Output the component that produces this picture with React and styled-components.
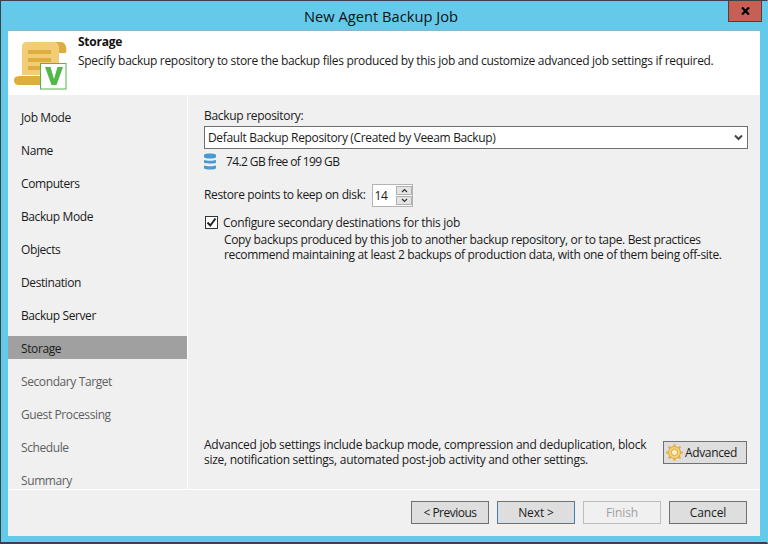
import React from "react";
import styled, { createGlobalStyle } from "styled-components";

const Global = createGlobalStyle`
  html, body { margin: 0; padding: 0; background: #65caea; }
  body { font-family: "Open Sans", "Noto Sans", "Liberation Sans", sans-serif; font-size: 12px; color: #1a1a1a; }
`;

const Win = styled.div`
  width: 768px; height: 544px; box-sizing: border-box;
  background: #65caea; border: 1px solid #3b4148; border-bottom-width: 2px; border-right-color: #65caea;
  display: flex; flex-direction: column; position: relative; overflow: hidden;
`;
const TitleBar = styled.div`
  height: 29px; flex: none; display: flex; align-items: center; justify-content: center;
  font-size: 14.7px; color: #111; box-sizing: border-box; padding: 1px 6px 0 0;
`;
const CloseBtn = styled.div`
  position: absolute; top: 0; right: 5px; width: 34px; height: 21px; box-sizing: border-box;
  background: #c75f54; border: 1px solid #5c3a38; border-top: none;
  display: flex; align-items: center; justify-content: center;
`;
const Body = styled.div`
  flex: 1; margin: 0 7px 6px 7px; display: flex; flex-direction: column;
  background: #f0f0f0; border-top: 1px solid #8fb5c4; min-height: 0;
`;
const Header = styled.div`
  height: 64px; flex: none; background: #fff; display: flex; box-sizing: border-box;
  padding: 3px 0 0 6px;
`;
const HeaderIcon = styled.div`
  width: 64px; flex: none; padding-top: 8px; box-sizing: border-box;
`;
const HeaderText = styled.div`
  line-height: 16px;
`;
const HeaderTitle = styled.div`
  font-weight: 700; color: #111; margin-bottom: 3px; letter-spacing: -0.25px;
`;
const HeaderDesc = styled.div`
  color: #1a1a1a; letter-spacing: -0.31px; white-space: nowrap;
`;
const Middle = styled.div`
  flex: 1; display: flex; min-height: 0;
`;
const Sidebar = styled.nav`
  width: 179px; flex: none; padding-top: 10px; box-sizing: border-box; overflow: hidden;
  display: flex; flex-direction: column; gap: 10px;
`;
const Step = styled.div`
  height: 23px; flex: none; box-sizing: border-box; display: flex; align-items: center; padding: 1px 0 0 13px;
  background: ${p => (p.$active ? "#a0a0a0" : "transparent")};
  color: ${p => (p.$disabled ? "#5f5f5f" : "#1a1a1a")};
  letter-spacing: -0.4px;
`;
const Divider = styled.div`
  width: 1px; flex: none; background: #fff;
`;
const Content = styled.main`
  flex: 1; min-width: 0; padding: 12px 12px 0 16px; display: flex; flex-direction: column;
`;
const FieldLabel = styled.div`
  line-height: 18px; letter-spacing: -0.3px; margin-bottom: 1px;
`;
const Select = styled.div`
  height: 23px; flex: none; box-sizing: border-box; background: #fff; border: 1px solid #6e6e6e;
  display: flex; align-items: center; justify-content: space-between; padding: 0 4px 0 3px;
  letter-spacing: -0.34px;
`;
const FreeRow = styled.div`
  display: flex; align-items: center; gap: 10px; height: 20px; margin-top: 2px; letter-spacing: -0.6px;
`;
const RestoreRow = styled.div`
  display: flex; align-items: center; gap: 7px; margin-top: 13px; height: 23px; letter-spacing: -0.35px;
`;
const RestoreLabel = styled.span`
  padding-bottom: 2px;
`;
const Spin = styled.div`
  width: 41px; height: 23px; box-sizing: border-box; border: 1px solid #b4b4b4; background: #fff;
  display: flex; justify-content: space-between; align-items: center; padding: 0 0 0 1px;
`;
const SpinBtns = styled.div`
  width: 16px; height: 19px; display: flex; flex-direction: column; gap: 1px;
`;
const SpinBtn = styled.div`
  flex: 1; background: #e4e4e4; border: 1px solid #b0b0b0; box-sizing: border-box;
  display: flex; align-items: center; justify-content: center;
`;
const CheckRow = styled.div`
  display: flex; align-items: center; gap: 5px; margin: 6px 0 0 1px; height: 18px; letter-spacing: -0.31px;
`;
const Box = styled.div`
  width: 13px; height: 13px; box-sizing: border-box; border: 1px solid #333; background: #fff;
  display: flex; align-items: center; justify-content: center;
`;
const Help = styled.div`
  margin: 1px 0 0 20px; line-height: 15px; letter-spacing: -0.34px; white-space: nowrap;
`;
const Spacer = styled.div`flex: 1;`;
const AdvRow = styled.div`
  display: flex; justify-content: space-between; align-items: flex-start; padding: 0 1px 22px 0;
`;
const AdvText = styled.div`
  line-height: 15px; letter-spacing: -0.27px; white-space: nowrap;
`;
const Btn = styled.button`
  width: ${p => p.$w || 78}px; height: 23px; flex: none; box-sizing: border-box; padding: 0; margin: 0;
  font: inherit; letter-spacing: ${p => p.$ls || "-0.1px"};
  background: ${p => (p.$disabled ? "#f0f0f0" : "#dedede")};
  border: 1px solid ${p => (p.$disabled ? "#bdbdbd" : p.$focus ? "#3f7fb0" : "#707070")};
  color: ${p => (p.$disabled ? "#a0a0a0" : "#1a1a1a")};
  display: flex; align-items: center; justify-content: center;
`;
const AdvBtn = styled(Btn)`
  justify-content: flex-start; padding-left: 2px; gap: 2px; margin-top: 4px;
`;
const Footer = styled.footer`
  height: 47px; flex: none; border-top: 1px solid #fff; box-sizing: border-box;
  display: flex; justify-content: flex-end; gap: 8px; padding: 11px 13px 0 0;
`;

const Scroll = () => (
  <svg width="53" height="48" viewBox="0 0 53 48" style={{ display: "block" }}>
    <path d="M12 0H46C51 0 53 4 52 10H45V33H8V4C8 2 10 0 12 0Z" fill="#f3cd75" />
    <path d="M41 0H46C51 0 53 4 52 11H45V7C45 3 44 1 41 0Z" fill="#dcae40" />
    <path d="M0 38C0 35 2 34 8 34H27V43H6C2 43 0 42 0 38Z" fill="#dcae40" />
    <path d="M14 8H37V12H14ZM14 16H37V20H14ZM14 24H27V28H14Z" fill="#dcae40" />
    <rect x="26.5" y="21.5" width="25.5" height="25.5" fill="#fff" stroke="#52b848" strokeWidth="1" />
    <path d="M31 25H36.5L40 37L43.5 25H49L42.5 43H37.5Z" fill="#52b848" />
  </svg>
);
const Db = () => (
  <svg width="12" height="17" viewBox="0 0 12 17">
    <path d="M0 2C0 0 12 0 12 2V4C12 6 0 6 0 4ZM0 7C3 8 9 8 12 7V9.5C12 11 0 11 0 9.5ZM0 12.5C3 13.5 9 13.5 12 12.5V15C12 17 0 17 0 15Z" fill="#4a9ad1" />
  </svg>
);
const Gear = () => (
  <svg width="17" height="17" viewBox="0 0 17 17">
    <g stroke="#e9b040" strokeWidth="2">
      <path d="M8.5 0V17M0 8.5H17M2.5 2.5L14.5 14.5M14.5 2.5L2.5 14.5" />
    </g>
    <circle cx="8.5" cy="8.5" r="6" fill="#f5d27e" stroke="#e0a52f" />
    <circle cx="8.5" cy="8.5" r="3.2" fill="#fbeecb" stroke="#e0a52f" />
  </svg>
);
const steps = ["Job Mode","Name","Computers","Backup Mode","Objects","Destination","Backup Server","Storage","Secondary Target","Guest Processing","Schedule","Summary"];

export default function App() {
  return (
    <>
      <Global />
      <Win>
        <TitleBar>New Agent Backup Job</TitleBar>
        <CloseBtn>
          <svg width="9" height="8" viewBox="0 0 9 8"><path d="M1 0.5L8 7.5M8 0.5L1 7.5" stroke="#000" strokeWidth="2.2" /></svg>
        </CloseBtn>
        <Body>
          <Header>
            <HeaderIcon><Scroll /></HeaderIcon>
            <HeaderText>
              <HeaderTitle>Storage</HeaderTitle>
              <HeaderDesc>Specify backup repository to store the backup files produced by this job and customize advanced job settings if required.</HeaderDesc>
            </HeaderText>
          </Header>
          <Middle>
            <Sidebar>
              {steps.map((s, i) => (
                <Step key={s} $active={i === 7} $disabled={i > 7}>{s}</Step>
              ))}
            </Sidebar>
            <Divider />
            <Content>
              <FieldLabel>Backup repository:</FieldLabel>
              <Select>
                <span>Default Backup Repository (Created by Veeam Backup)</span>
                <svg width="9" height="7" viewBox="0 0 9 7"><path d="M1 1.5L4.5 5L8 1.5" fill="none" stroke="#444" strokeWidth="2" /></svg>
              </Select>
              <FreeRow><Db /><span>74.2 GB free of 199 GB</span></FreeRow>
              <RestoreRow>
                <RestoreLabel>Restore points to keep on disk:</RestoreLabel>
                <Spin>
                  <span>14</span>
                  <SpinBtns>
                    <SpinBtn><svg width="7" height="5" viewBox="0 0 7 5"><path d="M1 4L3.5 1.5L6 4" fill="none" stroke="#333" strokeWidth="1.2" /></svg></SpinBtn>
                    <SpinBtn><svg width="7" height="5" viewBox="0 0 7 5"><path d="M1 1L3.5 3.5L6 1" fill="none" stroke="#333" strokeWidth="1.2" /></svg></SpinBtn>
                  </SpinBtns>
                </Spin>
              </RestoreRow>
              <CheckRow>
                <Box><svg width="11" height="11" viewBox="0 0 11 11"><path d="M1.5 5.5L4.3 8.5L9.5 1.5" fill="none" stroke="#222" strokeWidth="2" /></svg></Box>
                <span>Configure secondary destinations for this job</span>
              </CheckRow>
              <Help>
                Copy backups produced by this job to another backup repository, or to tape. Best practices<br />
                recommend maintaining at least 2 backups of production data, with one of them being off-site.
              </Help>
              <Spacer />
              <AdvRow>
                <AdvText>
                  Advanced job settings include backup mode, compression and deduplication, block<br />
                  size, notification settings, automated post-job activity and other settings.
                </AdvText>
                <AdvBtn $w={84} $ls="-0.35px"><Gear />Advanced</AdvBtn>
              </AdvRow>
            </Content>
          </Middle>
          <Footer>
            <Btn $ls="-0.5px">&lt; Previous</Btn>
            <Btn $focus>Next &gt;</Btn>
            <Btn $disabled>Finish</Btn>
            <Btn>Cancel</Btn>
          </Footer>
        </Body>
      </Win>
    </>
  );
}
